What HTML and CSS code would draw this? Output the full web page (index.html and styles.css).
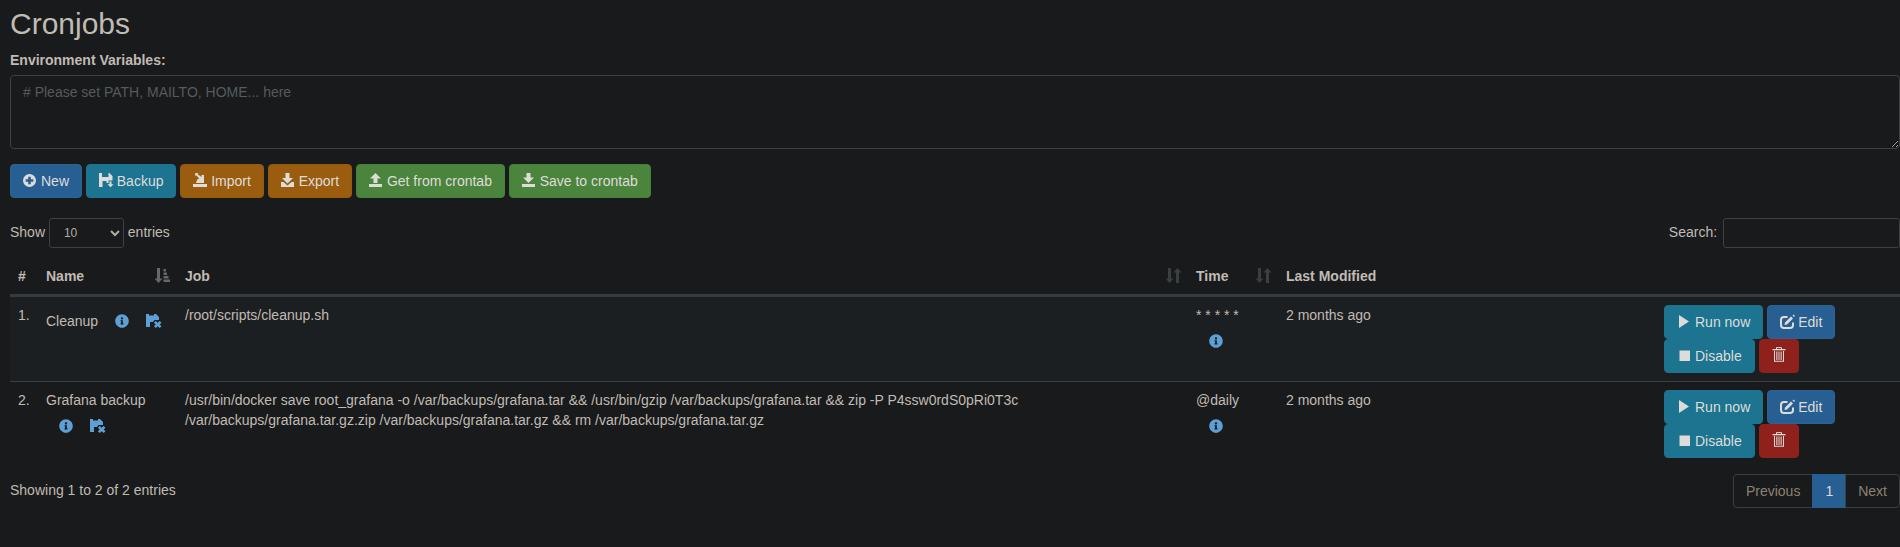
FILE: index.html
```html
<!DOCTYPE html>
<html lang="en">
<head>
    <meta charset="UTF-8">
    <meta name="viewport" content="width=device-width, initial-scale=1.0">
    <title>Cronjobs</title>
    <link rel="stylesheet" href="styles.css">
</head>
<body>

    <svg class="sprites" aria-hidden="true">
        <symbol id="i-plus" viewBox="0 0 18 16"><path fill-rule="evenodd" d="M6.500 1a6.500 6.500 0 1 1 0 13 6.500 6.500 0 0 1 0-13zM5.200 3.700v2.500H2.700v2.600h2.500v2.500h2.600V8.800h2.500V6.200H7.800V3.700z"/></symbol>
        <symbol id="i-info" viewBox="0 0 512 512"><path d="M256 8C119.043 8 8 119.083 8 256c0 136.997 111.043 248 248 248s248-111.003 248-248C504 119.083 392.957 8 256 8zm0 110c23.196 0 42 18.804 42 42s-18.804 42-42 42-42-18.804-42-42 18.804-42 42-42zm56 254c0 6.627-5.373 12-12 12h-88c-6.627 0-12-5.373-12-12v-24c0-6.627 5.373-12 12-12h12v-64h-12c-6.627 0-12-5.373-12-12v-24c0-6.627 5.373-12 12-12h64c6.627 0 12 5.373 12 12v100h12c6.627 0 12 5.373 12 12v24z"/></symbol>
        <symbol id="i-backup" viewBox="0 0 18 16"><path d="M0 0h3v4h6.500V0h.8L13.500 3v4.500H9.500V10H7.500V8H3.500v6H0z"/><path d="M10.500 8.500h2v2.800h2l-3 3-3-3h2z"/></symbol>
        <symbol id="i-remove" viewBox="0 0 16 16"><path d="M0 1h3v1.500h5V1h2l3 3v3H8.500L7 9H4v5H0z"/><path d="M9.800 8l1.900 1.700L13.600 8l1.900 1.800-1.800 1.700 1.800 1.700-1.900 1.800-1.900-1.700-1.900 1.700-1.900-1.800 1.800-1.700-1.800-1.700z"/></symbol>
        <symbol id="i-import" viewBox="0 0 18 16"><path d="M0 11h14v3H0z"/><path d="M8.500 2H11v8H3l1.200-3.500 2-1-3-3.200L2.300 3.200 2 0l3.500.3-.8.900 3.800 2.900z"/></symbol>
        <symbol id="i-export" viewBox="0 0 18 16"><path d="M4.500 0h4v5H12l-5.500 5.500L1 5h3.500z"/><path d="M0 9h2.500l4 3.500 4-3.500H13v5H0z"/></symbol>
        <symbol id="i-upload" viewBox="0 0 18 16"><path d="M6.500 0L12 5.500H8.500V10h-4V5.500H1z"/><path d="M0 11h13v3H0z"/></symbol>
        <symbol id="i-download" viewBox="0 0 18 16"><path d="M4.500 0h4v4.500H12L6.500 10 1 4.500h3.500z"/><path d="M0 11h13v3H0z"/></symbol>
        <symbol id="i-play" viewBox="0 0 18 16"><path d="M2 1l10 6.500L2 14z"/></symbol>
        <symbol id="i-stop" viewBox="0 0 18 16"><path d="M2.500 2.500H13V13H2.500z"/></symbol>
        <symbol id="i-edit" viewBox="0 0 18 16"><path d="M7.500 3H4A3 3 0 0 0 1 6v5a3 3 0 0 0 3 3h6a3 3 0 0 0 3-3V8.500" fill="none" stroke="currentColor" stroke-width="2"/><path d="M5 8.500l6-6 2 2-6 6-2.500.500zM12.500 1.500l1-1 1.500 1.500-1 1z"/></symbol>
        <symbol id="i-trash" viewBox="0 0 14 16"><path d="M4.500 2V.6h5V2" fill="none" stroke="currentColor"/><path d="M.500 2h13v1.300H.500z"/><path d="M2 4h1v9.800h8V4h1v10.800H2z"/><path d="M4.300 4.500h1.100v8.500H4.300zM6.500 4.500h1v8.500h-1zM8.600 4.500h1.100v8.500H8.600z"/></symbol>
        <symbol id="i-sort" viewBox="0 0 15 15"><path d="M2 0h3v10.500h2.500L3.500 15-.5 10.500H2z"/><path d="M10 4.500H7.500L11.500 0l4 4.500H13V15h-3z"/></symbol>
        <symbol id="i-sort-asc" viewBox="0 0 15 15"><path d="M2 0h3v10.500h2.500L3.500 15-.5 10.500H2z"/><path d="M8.500 1h2.500v2.500H8.500zM8.500 4.500h3.500V7H8.500zM8.500 8h5v2.500h-5zM8.500 11.500H15V14H8.500z"/></symbol>
    </svg>

    <div class="page">
        <h2 class="title">Cronjobs</h2>
        <label class="env-label" for="env">Environment Variables:</label>
        <textarea class="env-input" id="env" placeholder="# Please set PATH, MAILTO, HOME... here"></textarea>

        <div class="toolbar">
            <button class="btn btn-primary"><svg class="ico"><use href="#i-plus"/></svg>New</button>
            <button class="btn btn-info"><svg class="ico"><use href="#i-backup"/></svg>Backup</button>
            <button class="btn btn-warning"><svg class="ico"><use href="#i-import"/></svg>Import</button>
            <button class="btn btn-warning"><svg class="ico"><use href="#i-export"/></svg>Export</button>
            <button class="btn btn-success"><svg class="ico"><use href="#i-upload"/></svg>Get from crontab</button>
            <button class="btn btn-success"><svg class="ico"><use href="#i-download"/></svg>Save to crontab</button>
        </div>

        <div class="table-top">
            <label class="length">Show
                <select class="input-sm">
                    <option>10</option>
                    <option>25</option>
                    <option>50</option>
                </select>
                entries</label>
            <label class="search">Search: <input class="input-sm search-input" type="search"></label>
        </div>

        <table class="jobs">
            <colgroup>
                <col class="col-num">
                <col class="col-name">
                <col class="col-job">
                <col class="col-time">
                <col class="col-modified">
                <col class="col-actions">
            </colgroup>
            <thead>
                <tr>
                    <th>#</th>
                    <th>Name<svg class="sort sort-active"><use href="#i-sort-asc"/></svg></th>
                    <th>Job<svg class="sort"><use href="#i-sort"/></svg></th>
                    <th>Time<svg class="sort"><use href="#i-sort"/></svg></th>
                    <th>Last Modified</th>
                    <th></th>
                </tr>
            </thead>
            <tbody>
                <tr class="odd">
                    <td>1.</td>
                    <td>Cleanup
                        <a class="row-icon"><svg class="ico-info"><use href="#i-info"/></svg></a>
                        <a class="row-icon row-icon-save"><svg class="ico-save"><use href="#i-remove"/></svg></a>
                    </td>
                    <td>/root/scripts/cleanup.sh</td>
                    <td>* * * * *
                        <a class="row-icon"><svg class="ico-info"><use href="#i-info"/></svg></a>
                    </td>
                    <td>2 months ago</td>
                    <td>
                        <button class="btn btn-info"><svg class="ico"><use href="#i-play"/></svg>Run now</button>
                        <button class="btn btn-primary"><svg class="ico"><use href="#i-edit"/></svg>Edit</button>
                        <button class="btn btn-info"><svg class="ico"><use href="#i-stop"/></svg>Disable</button>
                        <button class="btn btn-danger"><svg class="ico-trash"><use href="#i-trash"/></svg></button>
                    </td>
                </tr>
                <tr>
                    <td>2.</td>
                    <td>Grafana backup
                        <a class="row-icon"><svg class="ico-info"><use href="#i-info"/></svg></a>
                        <a class="row-icon row-icon-save"><svg class="ico-save"><use href="#i-remove"/></svg></a>
                    </td>
                    <td>/usr/bin/docker save root_grafana -o /var/backups/grafana.tar &amp;&amp; /usr/bin/gzip /var/backups/grafana.tar &amp;&amp; zip -P P4ssw0rdS0pRi0T3c /var/backups/grafana.tar.gz.zip /var/backups/grafana.tar.gz &amp;&amp; rm /var/backups/grafana.tar.gz</td>
                    <td>@daily
                        <a class="row-icon"><svg class="ico-info"><use href="#i-info"/></svg></a>
                    </td>
                    <td>2 months ago</td>
                    <td>
                        <button class="btn btn-info"><svg class="ico"><use href="#i-play"/></svg>Run now</button>
                        <button class="btn btn-primary"><svg class="ico"><use href="#i-edit"/></svg>Edit</button>
                        <button class="btn btn-info"><svg class="ico"><use href="#i-stop"/></svg>Disable</button>
                        <button class="btn btn-danger"><svg class="ico-trash"><use href="#i-trash"/></svg></button>
                    </td>
                </tr>
            </tbody>
        </table>

        <div class="table-bottom">
            <div class="info">Showing 1 to 2 of 2 entries</div>
            <ul class="pagination">
                <li>Previous</li>
                <li class="active">1</li>
                <li>Next</li>
            </ul>
        </div>
    </div>

</body>
</html>
```

FILE: styles.css
```css
* {
    box-sizing: border-box;
}

body {
    font-family: "Liberation Sans", Arial, sans-serif;
    font-size: 14px;
    line-height: 20px;
    background-color: #181a1b;
    color: #c0bbb4;
    margin: 0;
}

.sprites {
    display: none;
}

.page {
    padding: 7px 0 0 10px;
}

.title {
    font-size: 30px;
    font-weight: 400;
    line-height: 33px;
    margin: 0 0 10px;
}

.env-label {
    display: block;
    font-weight: 700;
    margin-bottom: 5px;
}

.env-input {
    display: block;
    width: 100%;
    height: 74px;
    padding: 6px 12px;
    font: inherit;
    color: #b2aca2;
    background-color: #181a1b;
    border: 1px solid #3c4143;
    border-radius: 4px;
    resize: vertical;
    outline: none;
}

.env-input::placeholder {
    color: #565b5e;
}

.toolbar {
    display: flex;
    gap: 3.75px;
    margin-top: 15px;
    margin-bottom: 20px;
}

.btn {
    display: inline-block;
    height: 34px;
    padding: 6px 12px;
    font: inherit;
    color: #dedcd9;
    border: 1px solid transparent;
    border-radius: 4px;
    cursor: pointer;
    vertical-align: middle;
}

.btn-primary {
    background-color: #285f92;
    border-color: #2a6496;
}

.btn-info {
    background-color: #1c7490;
    border-color: #1d7390;
}

.btn-warning {
    background-color: #9a5c0e;
    border-color: #945a10;
}

.btn-success {
    background-color: #4b843c;
    border-color: #468039;
}

.btn-danger {
    background-color: #8f211d;
    border-color: #8f211d;
}

.ico {
    display: inline-block;
    width: 18px;
    height: 16px;
    vertical-align: -3px;
    fill: currentColor;
}

.ico-trash {
    display: inline-block;
    width: 14px;
    height: 16px;
    vertical-align: -2px;
    fill: currentColor;
}

.table-top {
    display: flex;
    justify-content: space-between;
    align-items: center;
    height: 30px;
    margin-bottom: 10px;
}

.input-sm {
    height: 30px;
    font: inherit;
    font-size: 12px;
    line-height: 1.5;
    color: #b2aca2;
    background-color: #181a1b;
    border: 1px solid #3c4143;
    border-radius: 3px;
    padding: 5px 10px;
    outline: none;
    vertical-align: middle;
}

.length select {
    width: 75px;
    margin: 0;
    color-scheme: dark;
}

.search-input {
    width: 177px;
    margin-left: 2px;
}

.jobs {
    width: 100%;
    border-collapse: collapse;
    table-layout: fixed;
}

.col-num { width: 28px; }
.col-name { width: 139px; }
.col-job { width: 1011px; }
.col-time { width: 90px; }
.col-modified { width: 378px; }

.jobs th {
    position: relative;
    padding: 8px;
    text-align: left;
    font-weight: 700;
    border-bottom: 3px solid #363b3d;
}

.jobs td {
    padding: 8px;
    vertical-align: top;
    border-top: 1px solid #3a3f41;
}

.jobs tbody tr:first-child td {
    border-top: none;
}

.jobs tr.odd {
    background-color: #1c1f21;
}

.sort {
    position: absolute;
    right: 7px;
    top: 10px;
    width: 15px;
    height: 15px;
    fill: #3a3f41;
}

.sort-active {
    fill: #65696b;
}

.row-icon {
    display: inline-block;
    height: 34px;
    padding: 6px 13px;
    border: 0;
    color: #5ea0d6;
    vertical-align: baseline;
}

.row-icon-save {
    padding-left: 0;
    padding-right: 0;
}

.ico-info {
    width: 14px;
    height: 14px;
    vertical-align: -2px;
    fill: currentColor;
}

.ico-save {
    width: 16px;
    height: 16px;
    vertical-align: -3px;
    fill: currentColor;
}

.table-bottom {
    display: flex;
    justify-content: space-between;
    align-items: flex-start;
    margin-top: 8px;
}

.info {
    padding-top: 6px;
}

.pagination {
    display: flex;
    list-style: none;
    margin: 0;
    padding: 0;
    color: #8c8273;
}

.pagination li {
    height: 34px;
    padding: 6px 12px;
    margin-left: -1px;
    line-height: 20px;
    border: 1px solid #3a3f41;
}

.pagination li:first-child {
    margin-left: 0;
    border-radius: 4px 0 0 4px;
}

.pagination li:last-child {
    border-radius: 0 4px 4px 0;
}

.pagination .active {
    background-color: #285f92;
    border-color: #285f92;
    color: #dedcd9;
}
```
